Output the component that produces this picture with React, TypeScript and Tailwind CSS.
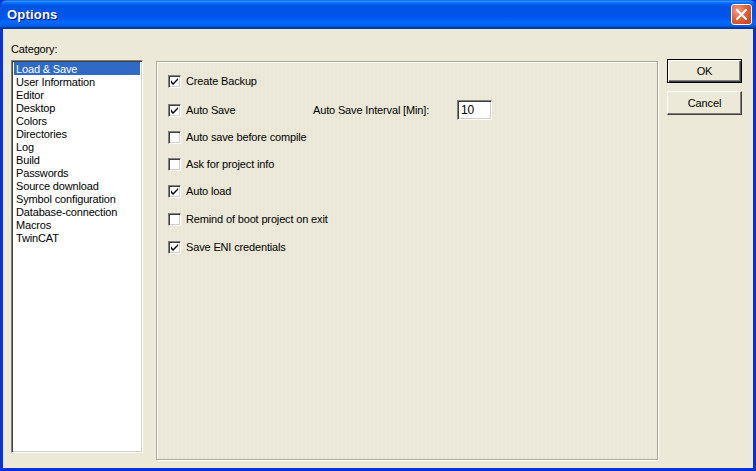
import React from "react";

const categories = [
  "Load & Save",
  "User Information",
  "Editor",
  "Desktop",
  "Colors",
  "Directories",
  "Log",
  "Build",
  "Passwords",
  "Source download",
  "Symbol configuration",
  "Database-connection",
  "Macros",
  "TwinCAT",
];

function CheckBox({ checked }: { checked: boolean }) {
  return (
    <span className="w-[13px] h-[13px] shrink-0 bg-white border-t border-l border-[#808080] border-r border-b border-r-[#fff] border-b-[#fff] shadow-[inset_1px_1px_0_#404040,inset_-1px_-1px_0_#D4D0C8] flex items-center justify-center">
      {checked && (
        <svg width="7" height="7" viewBox="0 0 7 7" className="block">
          <path d="M0 2 L0 5 L2 7 L7 2 L7 0 L2 5 Z" fill="#000" />
        </svg>
      )}
    </span>
  );
}

function CheckRow({ label, checked, className }: { label: string; checked: boolean; className?: string }) {
  return (
    <div className={"flex items-center h-[13px] " + (className || "")}>
      <CheckBox checked={checked} />
      <span className="ml-[5px] whitespace-nowrap">{label}</span>
    </div>
  );
}

export default function App() {
  return (
    <div
      className="w-[756px] h-[471px] flex flex-col bg-[#0831D9] text-[11px] tracking-[-0.15px] text-black overflow-hidden"
      style={{ fontFamily: '"Liberation Sans", Arial, sans-serif' }}
    >
      {/* Title bar */}
      <div className="h-[29px] shrink-0 flex items-center pl-[7px] pr-[4px] bg-[linear-gradient(to_bottom,#0058EE_0%,#3593FF_4%,#288EFF_6%,#127DFF_8%,#036FFC_10%,#0262EE_14%,#0057E5_20%,#0054E3_24%,#0055EB_56%,#005BF5_66%,#026AFE_76%,#0062EF_86%,#0052D6_92%,#0040AB_94%,#003092_100%)] rounded-t-[7px]">
        <span className="text-white font-bold text-[13px] tracking-[0.2px] [text-shadow:1px_1px_0_#0A1883]">Options</span>
        <div className="ml-auto w-[21px] h-[21px] rounded-[3px] border border-white bg-[radial-gradient(circle_at_30%_30%,#F0A28A_0%,#E2603A_45%,#C3401A_100%)] flex items-center justify-center">
          <svg width="11" height="11" viewBox="0 0 11 11">
            <path d="M1 1 L10 10 M10 1 L1 10" stroke="#fff" strokeWidth="2.2" strokeLinecap="square" />
          </svg>
        </div>
      </div>

      {/* Client area */}
      <div className="flex-1 mx-[3px] mb-[3px] bg-[#ECE9D8] flex pl-[8px]">
        {/* Category list */}
        <div className="flex flex-col pt-[14px] w-[132px]">
          <div className="h-[17px] leading-[13px]">Category:</div>
          <div className="h-[393px] bg-white border-t border-l border-[#808080] border-r border-b border-r-[#fff] border-b-[#fff] shadow-[inset_1px_1px_0_#404040,inset_-1px_-1px_0_#D4D0C8] p-[1px] pt-[1px]">
            {categories.map((c, i) => (
              <div
                key={c}
                className={
                  "h-[13px] leading-[14px] pl-[2px] mx-[1px] whitespace-nowrap " +
                  (i === 0 ? "bg-[#316AC5] text-white" : "")
                }
              >
                {c}
              </div>
            ))}
          </div>
        </div>

        {/* Options group */}
        <div className="ml-[13px] mt-[32px] w-[502px] h-[399px] border border-[#ACA899] shadow-[inset_1px_1px_0_#fff,1px_1px_0_#fff] bg-[repeating-linear-gradient(90deg,#EDEADB_0px,#EDEADB_2px,#E9E6D5_2px,#E9E6D5_4px)] pl-[11px] pt-[13px] flex flex-col">
          <CheckRow label="Create Backup" checked />
          <div className="flex items-center h-[20px] mt-[12px]">
            <div className="w-[145px]">
              <CheckRow label="Auto Save" checked />
            </div>
            <span className="w-[144px] whitespace-nowrap">Auto Save Interval [Min]:</span>
            <div className="w-[35px] h-[20px] bg-white border-t border-l border-[#808080] border-r border-b border-r-[#fff] border-b-[#fff] shadow-[inset_1px_1px_0_#404040,inset_-1px_-1px_0_#D4D0C8] pl-[3px] flex items-center text-[12px]">
              10
            </div>
          </div>
          <CheckRow label="Auto save before compile" checked={false} className="mt-[11px]" />
          <CheckRow label="Ask for project info" checked={false} className="mt-[14px]" />
          <CheckRow label="Auto load" checked className="mt-[14px]" />
          <CheckRow label="Remind of boot project on exit" checked={false} className="mt-[15px]" />
          <CheckRow label="Save ENI credentials" checked className="mt-[15px]" />
        </div>

        {/* Buttons */}
        <div className="ml-[9px] mt-[30px] w-[75px] flex flex-col gap-[8px]">
          <div className="h-[24px] border border-black bg-[#ECE9D8] shadow-[inset_1px_1px_0_#fff,inset_-1px_-1px_0_#404040,inset_-2px_-2px_0_#808080] flex items-center justify-center">
            OK
          </div>
          <div className="h-[24px] bg-[#ECE9D8] border-t border-l border-[#fff] border-r border-b border-r-[#404040] border-b-[#404040] shadow-[inset_-1px_-1px_0_#808080] flex items-center justify-center">
            Cancel
          </div>
        </div>
      </div>
    </div>
  );
}
